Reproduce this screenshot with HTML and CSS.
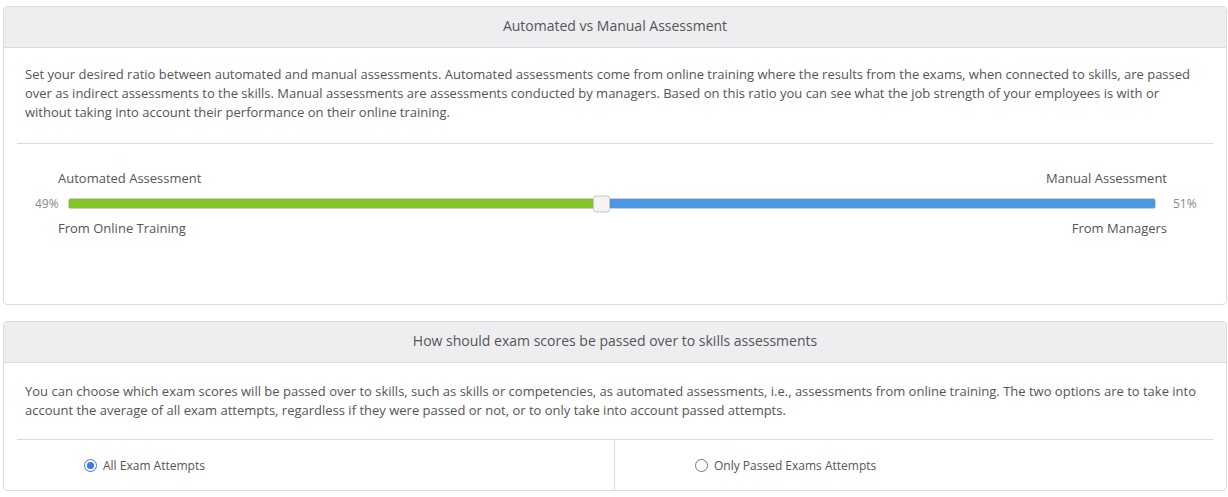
FILE: index.html
```html
<!DOCTYPE html>
<html>
<head>
<meta charset="utf-8">
<link rel="stylesheet" href="styles.css">
</head>
<body>
<div class="page">
  <section class="card card-ratio">
    <header class="card-head">Automated vs Manual Assessment</header>
    <div class="card-body">
      <p class="desc">Set your desired ratio between automated and manual assessments. Automated assessments come from online training where the results from the exams, when connected to skills, are passed over as indirect assessments to the skills. Manual assessments are assessments conducted by managers. Based on this ratio you can see what the job strength of your employees is with or without taking into account their performance on their online training.</p>
      <div class="divider"></div>
      <div class="slider-area">
        <div class="label-row">
          <span>Automated Assessment</span>
          <span>Manual Assessment</span>
        </div>
        <div class="slider-row">
          <span class="pct pct-left">49%</span>
          <div class="track">
            <div class="fill-auto" style="width:49%"></div>
            <div class="fill-manual"></div>
            <div class="handle" style="left:49%"></div>
          </div>
          <span class="pct pct-right">51%</span>
        </div>
        <div class="label-row">
          <span>From Online Training</span>
          <span>From Managers</span>
        </div>
      </div>
    </div>
  </section>

  <section class="card card-scores">
    <header class="card-head">How should exam scores be passed over to skills assessments</header>
    <div class="card-body">
      <p class="desc desc2">You can choose which exam scores will be passed over to skills, such as skills or competencies, as automated assessments, i.e., assessments from online training. The two options are to take into account the average of all exam attempts, regardless if they were passed or not, or to only take into account passed attempts.</p>
      <div class="divider"></div>
      <div class="options">
        <label class="option opt-left"><span class="radio checked"></span>All Exam Attempts</label>
        <label class="option opt-right"><span class="radio"></span>Only Passed Exams Attempts</label>
      </div>
    </div>
  </section>
</div>
</body>
</html>
```

FILE: styles.css
```css
html, body {
  margin: 0;
  padding: 0;
  background: #ffffff;
}
body {
  font-family: "Open Sans", "Liberation Sans", sans-serif;
  font-size: 13px;
  color: #555555;
}
.page {
  padding: 6px 1px 0 3px;
  display: flex;
  flex-direction: column;
  gap: 16px;
}
.card {
  border: 1px solid #dcdcdf;
  border-radius: 4px;
  background: #fff;
  overflow: hidden;
}
.card-ratio { height: 299px; box-sizing: border-box; }
.card-scores { height: 170px; box-sizing: border-box; }
.card-head {
  background: #eeeef1;
  border-bottom: 1px solid #dcdcdf;
  height: 40px;
  line-height: 38px;
  text-align: center;
  font-size: 14px;
  color: #555;
}
.card-body {
  padding: 0 13px;
}
.desc {
  margin: 0;
  padding: 17px 8px 0 8px;
  line-height: 19px;
  color: #555;
}
.desc2 { padding-top: 19px; }
.divider {
  height: 1px;
  background: #dcdcdf;
  margin-top: 21px;
}
.desc2 + .divider { margin-top: 19px; }
.slider-area {
  padding-top: 25px;
}
.label-row {
  display: flex;
  justify-content: space-between;
  padding: 0 46px 0 41px;
  line-height: 19px;
  color: #555;
}
.slider-row {
  display: flex;
  align-items: center;
  height: 25px;
  margin: 3px 0 3px 0;
}
.pct {
  font-size: 12px;
  color: #888;
  box-sizing: border-box;
}
.pct-left { padding-left: 18px; width: 51px; }
.pct-right { padding-left: 17px; width: 57px; }
.track {
  flex: 1;
  position: relative;
  height: 11px;
  border: 1px solid #cfcfcf;
  border-radius: 3px;
  box-sizing: border-box;
  display: flex;
  background: #4a98e1;
}
.fill-auto {
  background: #82c524;
  height: 100%;
  border-radius: 2px 0 0 2px;
}
.fill-manual {
  flex: 1;
  background: #4a98e1;
  height: 100%;
  border-radius: 0 2px 2px 0;
}
.handle {
  position: absolute;
  top: 50%;
  width: 17px;
  height: 17px;
  margin-left: -8px;
  transform: translateY(-50%);
  background: #f4f4f4;
  border: 1px solid #c8c8c8;
  border-radius: 3px;
  box-sizing: border-box;
}
.options {
  display: grid;
  grid-template-columns: 1fr 1fr;
  height: 50px;
}
.option {
  display: flex;
  align-items: center;
  font-size: 12px;
  color: #555;
}
.opt-left { padding-left: 67px; border-right: 1px solid #dcdcdf; }
.opt-right { padding-left: 80px; }
.radio {
  width: 13px;
  height: 13px;
  border-radius: 50%;
  border: 1px solid #767676;
  box-sizing: border-box;
  margin-right: 6px;
  position: relative;
  background: #fff;
}
.radio.checked {
  border: 1px solid #3b78e7;
}
.radio.checked::after {
  content: "";
  position: absolute;
  left: 2px;
  top: 2px;
  width: 7px;
  height: 7px;
  border-radius: 50%;
  background: #3b78e7;
}
```
